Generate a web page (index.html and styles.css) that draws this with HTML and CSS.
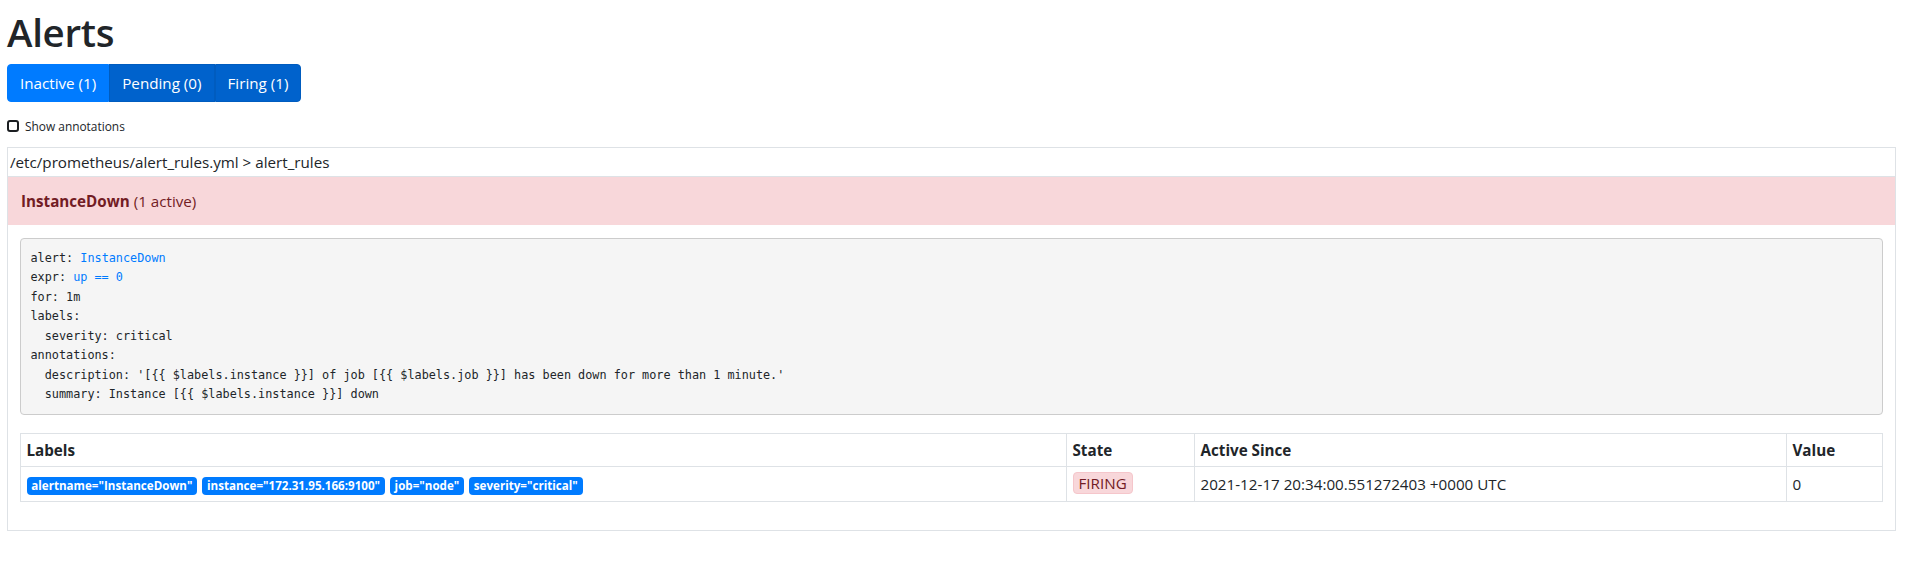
FILE: index.html
```html
<!DOCTYPE html>
<html lang="en">
<head>
<meta charset="utf-8">
<title>Alerts</title>
<link rel="stylesheet" href="styles.css">
</head>
<body>
<div class="page">
  <h1 class="title">Alerts</h1>
  <div class="btn-group">
    <button class="btn">Inactive (1)</button><button class="btn btn-on">Pending (0)</button><button class="btn btn-on">Firing (1)</button>
  </div>
  <label class="annot"><span class="checkbox"></span><span class="annot-text">Show annotations</span></label>
  <div class="group">
    <div class="group-path">/etc/prometheus/alert_rules.yml &gt; alert_rules</div>
    <div class="rule-head"><strong>InstanceDown</strong> (1 active)</div>
    <div class="rule-body">
<pre class="rule-code"><code>alert: <a class="code-link" href="#">InstanceDown</a>
expr: <a class="code-link" href="#">up == 0</a>
for: 1m
labels:
  severity: critical
annotations:
  description: '[{{ $labels.instance }}] of job [{{ $labels.job }}] has been down for more than 1 minute.'
  summary: Instance [{{ $labels.instance }}] down</code></pre>
      <table class="alerts-table">
        <colgroup>
          <col class="c-labels"><col class="c-state"><col class="c-since"><col class="c-value">
        </colgroup>
        <thead>
          <tr><th>Labels</th><th>State</th><th>Active Since</th><th>Value</th></tr>
        </thead>
        <tbody>
          <tr>
            <td><span class="badge">alertname="InstanceDown"</span><span class="badge">instance="172.31.95.166:9100"</span><span class="badge">job="node"</span><span class="badge">severity="critical"</span></td>
            <td><span class="state-firing">FIRING</span></td>
            <td>2021-12-17 20:34:00.551272403 +0000 UTC</td>
            <td>0</td>
          </tr>
        </tbody>
      </table>
    </div>
  </div>
</div>
</body>
</html>
```

FILE: styles.css
```css
* { box-sizing: border-box; }

html, body {
  margin: 0;
  padding: 0;
  background: #fff;
}

body {
  font-family: "Open Sans", "Liberation Sans", sans-serif;
  font-size: 15.2px;
  line-height: 24px;
  color: #212529;
}

.page {
  padding: 8px 16px 0 7px;
}

.title {
  margin: 0 0 8px;
  font-size: 38.5px;
  font-weight: 600;
  line-height: 48px;
  letter-spacing: -0.3px;
  color: #212529;
}

.btn-group {
  display: flex;
}

.btn {
  font-family: inherit;
  font-size: 15.2px;
  line-height: 24px;
  padding: 6px 12px;
  border: 1px solid #007bff;
  background: #007bff;
  color: #fff;
  margin: 0;
  cursor: pointer;
}

.btn:first-child {
  border-radius: 4px 0 0 4px;
}

.btn:last-child {
  border-radius: 0 4px 4px 0;
}

.btn-on {
  background: #0062cc;
  border-color: #005cbf;
}

.annot {
  display: flex;
  align-items: center;
  gap: 6px;
  margin-top: 16px;
  height: 16px;
  font-size: 11.9px;
  line-height: 16px;
  color: #212529;
}

.checkbox {
  display: block;
  width: 12px;
  height: 12px;
  border: 2px solid #1b1e21;
  border-radius: 3px;
  background: #fff;
}

.group {
  margin-top: 13px;
  border: 1px solid #dee2e6;
}

.group-path {
  height: 29px;
  padding: 2px 2px;
  border-bottom: 1px solid #dee2e6;
}

.rule-head {
  height: 48px;
  padding: 12px 13px;
  background: #f8d7da;
  color: #721c24;
}

.rule-head strong {
  font-weight: 700;
}

.rule-body {
  padding: 13px 12px 12px;
}

.rule-code {
  margin: 0 0 18px;
  padding: 9.5px;
  background: #f5f5f5;
  border: 1px solid #ccc;
  border-radius: 4px;
  font-family: "DejaVu Sans Mono", "Liberation Mono", monospace;
  font-size: 11.82px;
  line-height: 19.5px;
  color: #212529;
  white-space: pre;
}

.code-link {
  color: #007bff;
  text-decoration: none;
}

.alerts-table {
  width: 100%;
  table-layout: fixed;
  border-collapse: collapse;
  margin-bottom: 16px;
}

.c-state { width: 128px; }
.c-since { width: 592px; }
.c-value { width: 96px; }

.alerts-table th,
.alerts-table td {
  border: 1px solid #dee2e6;
  padding: 4.8px 5.5px;
  text-align: left;
  vertical-align: top;
}

.alerts-table th {
  font-weight: 700;
  padding-top: 4px;
  padding-bottom: 4px;
}

.badge {
  display: inline-block;
  margin-right: 5px;
  padding: 3px 4.8px;
  border-radius: 4px;
  background: #007bff;
  color: #fff;
  font-size: 11.6px;
  font-weight: 700;
  line-height: 12px;
  vertical-align: baseline;
  white-space: nowrap;
}

.state-firing {
  display: inline-block;
  padding: 0 5px;
  border: 1px solid #f5c6cb;
  border-radius: 4px;
  background: #f8d7da;
  color: #721c24;
  line-height: 20px;
  vertical-align: top;
}
```
